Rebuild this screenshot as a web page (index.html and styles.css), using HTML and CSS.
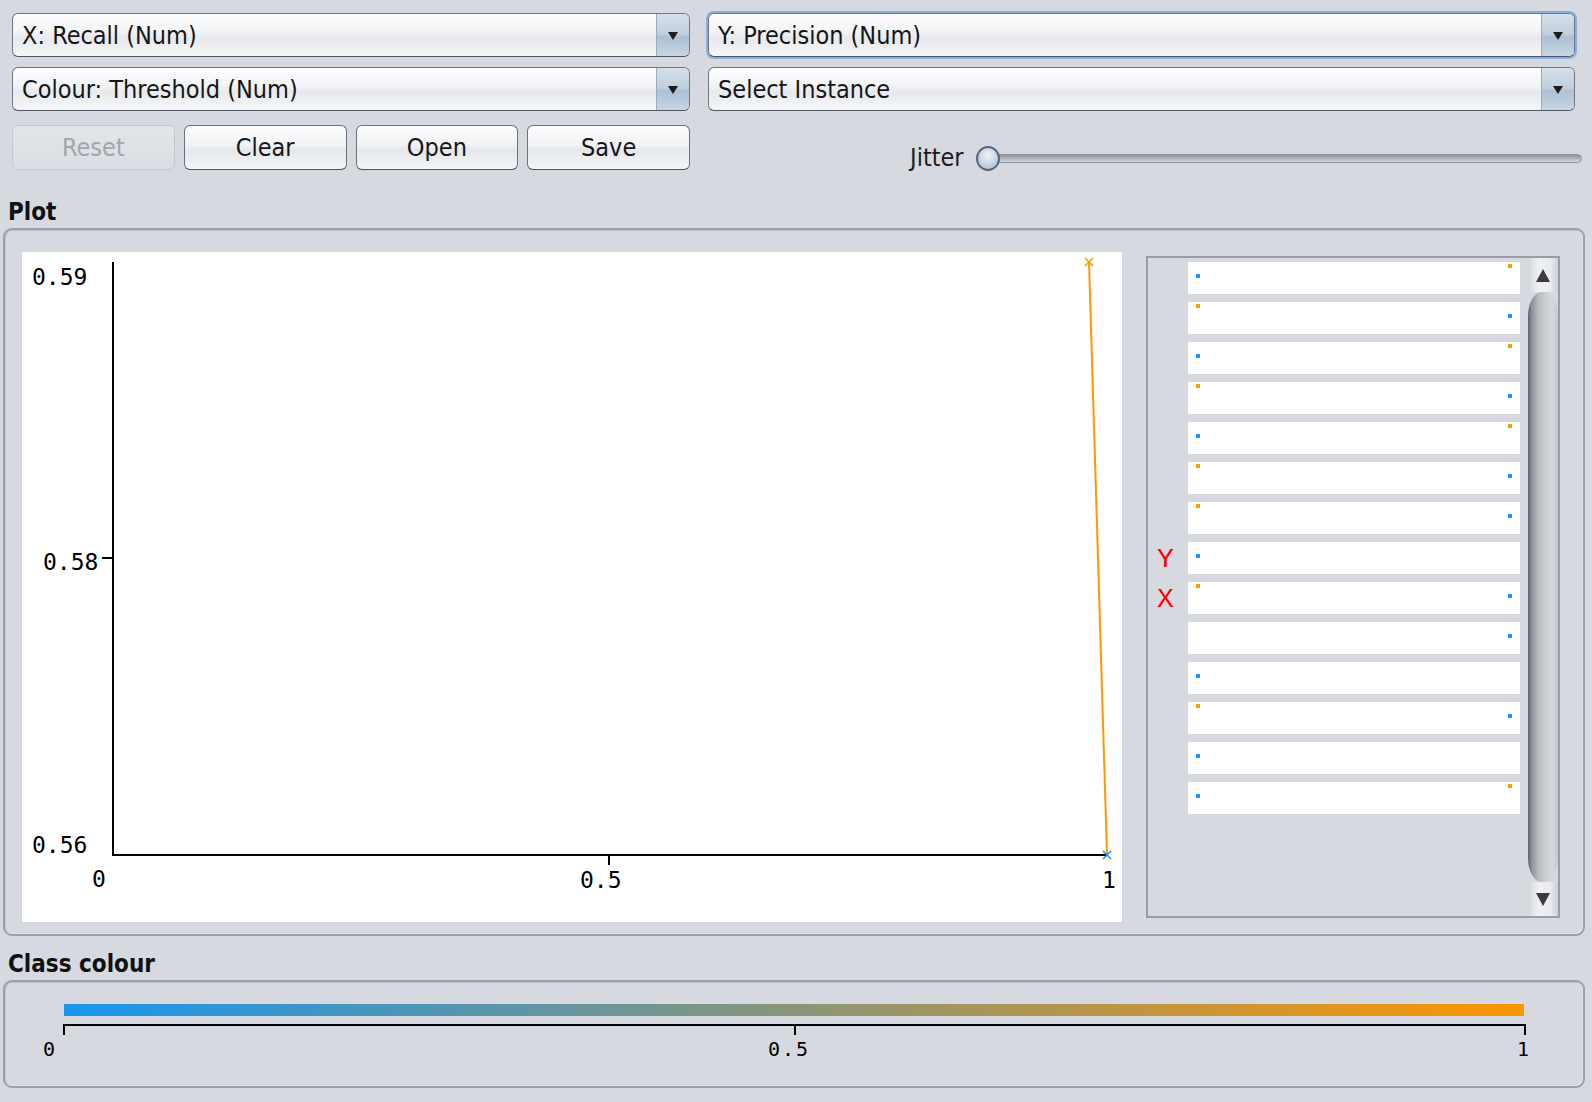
FILE: index.html
```html
<!DOCTYPE html>
<html>
<head>
<meta charset="utf-8">
<title>Plot</title>
<link rel="stylesheet" href="styles.css">
</head>
<body>
<div class="app">
  <div class="controls">
    <div class="combo"><span class="combo-text">X: Recall (Num)</span><span class="combo-arrow"><i class="tri-down"></i></span></div>
    <div class="combo focused"><span class="combo-text">Y: Precision (Num)</span><span class="combo-arrow"><i class="tri-down"></i></span></div>
    <div class="combo"><span class="combo-text">Colour: Threshold (Num)</span><span class="combo-arrow"><i class="tri-down"></i></span></div>
    <div class="combo"><span class="combo-text">Select Instance</span><span class="combo-arrow"><i class="tri-down"></i></span></div>
    <div class="buttons">
      <button class="btn" disabled>Reset</button>
      <button class="btn">Clear</button>
      <button class="btn">Open</button>
      <button class="btn">Save</button>
    </div>
    <div class="jitter">
      <span class="jitter-label">Jitter</span>
      <div class="slider"><div class="track"></div><div class="knob"></div></div>
    </div>
  </div>

  <div class="section-title">Plot</div>
  <div class="panel plot-panel">
    <div class="plot-area">
      <svg class="plot-svg" width="1100" height="670" viewBox="0 0 1100 670">
        <g stroke="#000" stroke-width="2" shape-rendering="crispEdges">
          <line x1="91" y1="10" x2="91" y2="604"/>
          <line x1="90" y1="603" x2="1086" y2="603"/>
          <line x1="80" y1="306" x2="91" y2="306"/>
          <line x1="587" y1="603" x2="587" y2="613"/>
        </g>
        <g class="axis-label">
          <text x="10" y="33">0.59</text>
          <text x="21" y="318">0.58</text>
          <text x="10" y="601">0.56</text>
          <text x="70" y="635">0</text>
          <text x="558" y="636">0.5</text>
          <text x="1080" y="636">1</text>
        </g>
        <line x1="1067" y1="10" x2="1085" y2="603" stroke="#ff9900" stroke-width="2"/>
        <g stroke="#ff9900" stroke-width="1.6">
          <line x1="1063" y1="6" x2="1071" y2="14"/>
          <line x1="1063" y1="14" x2="1071" y2="6"/>
        </g>
        <g stroke="#1a94f0" stroke-width="1.6">
          <line x1="1081" y1="599" x2="1089" y2="607"/>
          <line x1="1081" y1="607" x2="1089" y2="599"/>
        </g>
      </svg>
    </div>
    <div class="attr-panel">
      <div class="attr-list">
        <div class="attr-row"><span class="marker"></span><div class="bar"><i class="dot b l"></i><i class="dot o r"></i></div></div>
        <div class="attr-row"><span class="marker"></span><div class="bar"><i class="dot o l"></i><i class="dot b r"></i></div></div>
        <div class="attr-row"><span class="marker"></span><div class="bar"><i class="dot b l"></i><i class="dot o r"></i></div></div>
        <div class="attr-row"><span class="marker"></span><div class="bar"><i class="dot o l"></i><i class="dot b r"></i></div></div>
        <div class="attr-row"><span class="marker"></span><div class="bar"><i class="dot b l"></i><i class="dot o r"></i></div></div>
        <div class="attr-row"><span class="marker"></span><div class="bar"><i class="dot o l"></i><i class="dot b r"></i></div></div>
        <div class="attr-row"><span class="marker"></span><div class="bar"><i class="dot o l"></i><i class="dot b r"></i></div></div>
        <div class="attr-row"><span class="marker">Y</span><div class="bar"><i class="dot b l"></i></div></div>
        <div class="attr-row"><span class="marker">X</span><div class="bar"><i class="dot o l"></i><i class="dot b r"></i></div></div>
        <div class="attr-row"><span class="marker"></span><div class="bar"><i class="dot b r"></i></div></div>
        <div class="attr-row"><span class="marker"></span><div class="bar"><i class="dot b l"></i></div></div>
        <div class="attr-row"><span class="marker"></span><div class="bar"><i class="dot o l"></i><i class="dot b r"></i></div></div>
        <div class="attr-row"><span class="marker"></span><div class="bar"><i class="dot b l"></i></div></div>
        <div class="attr-row"><span class="marker"></span><div class="bar"><i class="dot b l"></i><i class="dot o r"></i></div></div>
      </div>
      <div class="scrollbar">
        <div class="sb-btn"><i class="tri-up"></i></div>
        <div class="sb-thumb"></div>
        <div class="sb-btn"><i class="tri-down-sb"></i></div>
      </div>
    </div>
  </div>

  <div class="section-title class-title">Class colour</div>
  <div class="panel class-panel">
    <div class="colour-bar"></div>
    <svg class="colour-axis" width="1578" height="50" viewBox="0 0 1578 50">
      <g stroke="#000" stroke-width="2" shape-rendering="crispEdges">
        <line x1="58" y1="9" x2="1521" y2="9"/>
        <line x1="59" y1="8" x2="59" y2="19"/>
        <line x1="790" y1="8" x2="790" y2="19"/>
        <line x1="1520" y1="8" x2="1520" y2="19"/>
      </g>
      <g class="scale-label">
        <text x="45" y="40" text-anchor="middle">0</text>
        <text x="763" y="40">0.5</text>
        <text x="1519" y="40" text-anchor="middle">1</text>
      </g>
    </svg>
  </div>
</div>
</body>
</html>
```

FILE: styles.css
```css
* { box-sizing: border-box; }
html, body { margin: 0; padding: 0; }
body {
  width: 1592px;
  height: 1102px;
  overflow: hidden;
  background: #d6d9df;
  font-family: "DejaVu Sans Condensed", "DejaVu Sans", sans-serif;
  font-stretch: condensed;
  color: #1c1c1c;
}

.controls {
  display: grid;
  grid-template-columns: 678px 867px;
  column-gap: 18px;
  row-gap: 10px;
  padding: 13px 0 0 12px;
}

.combo {
  height: 44px;
  display: flex;
  border: 1px solid #6f7681;
  border-bottom-color: #4f5661;
  border-radius: 6px;
  overflow: hidden;
  background: linear-gradient(to bottom, #fdfdfe 0%, #f3f4f6 40%, #e7e9ed 58%, #f5f6f8 100%);
}
.combo.focused { box-shadow: 0 0 0 2px #88ade0; }
.combo-text {
  flex: 1;
  display: flex;
  align-items: center;
  padding: 1px 0 0 9px;
  font-size: 25px;
  white-space: nowrap;
  color: #161616;
}
.combo-arrow {
  width: 33px;
  border-left: 1px solid #9aacc0;
  background: linear-gradient(to bottom, #d6e0eb 0%, #c0cedd 48%, #adc0d4 54%, #c8d5e3 100%);
  display: flex;
  align-items: center;
  justify-content: center;
}
.tri-down {
  width: 0; height: 0;
  border-left: 5px solid transparent;
  border-right: 5px solid transparent;
  border-top: 8px solid #1b1b1b;
  margin-top: 2px;
}

.buttons {
  display: grid;
  grid-template-columns: repeat(4, 1fr);
  column-gap: 9px;
  margin-top: 4px;
}
.btn {
  height: 45px;
  padding: 0;
  font-family: inherit;
  font-stretch: condensed;
  font-size: 25px;
  color: #161616;
  border: 1px solid #6a717c;
  border-bottom-color: #4c535e;
  border-radius: 6px;
  background: linear-gradient(to bottom, #fdfdfe 0%, #f1f2f5 45%, #e4e7eb 55%, #f4f5f7 100%);
}
.btn:disabled {
  color: #a3a6ab;
  border-color: #c5c8cd;
  background: linear-gradient(to bottom, #e3e5e9, #dadde2);
}

.jitter {
  display: flex;
  align-items: center;
  margin-top: 4px;
  margin-right: -7px;
  padding: 20px 0 0 202px;
}
.jitter-label { font-size: 25px; line-height: 24px; }
.slider {
  position: relative;
  flex: 1;
  height: 24px;
  margin-left: 10px;
}
.track {
  position: absolute;
  left: 12px; right: 0; top: 8px;
  height: 9px;
  border-radius: 5px;
  border: 1px solid #8d9198;
  background: linear-gradient(to bottom, #8f939a 0%, #b2b5bb 50%, #d3d6da 100%);
}
.knob {
  position: absolute;
  left: 2px; top: 0;
  width: 24px; height: 25px;
  border-radius: 50%;
  border: 2px solid #586679;
  background: radial-gradient(circle at 50% 35%, #eef3f8 0%, #c2d1e0 60%, #a2b6cb 100%);
}

.section-title {
  height: 28px;
  line-height: 28px;
  margin-top: 28px;
  padding-left: 8px;
  font-size: 24px;
  font-weight: bold;
  color: #111;
}
.class-title { margin-top: 14px; }

.panel {
  margin: 2px 7px 0 3px;
  border: 2px solid #9ca0a7;
  border-radius: 9px;
  box-shadow: inset 1px 1px 0 #c0c3c9, inset -1px -1px 0 #e2e4e8;
}
.plot-panel {
  height: 708px;
  display: flex;
  align-items: flex-start;
  gap: 24px;
  padding: 22px 23px 12px 17px;
}
.plot-area {
  width: 1100px;
  height: 670px;
  background: #fff;
  flex: none;
}
.plot-svg { display: block; }
.axis-label text {
  font-family: "DejaVu Sans Mono", monospace;
  font-size: 23px;
  fill: #000;
}

.attr-panel {
  width: 414px;
  height: 662px;
  margin-top: 4px;
  border: 2px solid #999da5;
  display: flex;
  flex: none;
}
.attr-list {
  flex: 1;
  display: flex;
  flex-direction: column;
  gap: 8px;
  padding-top: 4px;
}
.attr-row { display: flex; height: 32px; }
.marker {
  width: 40px;
  padding: 4px 0 0 9px;
  font-family: "Liberation Mono", "Courier New", monospace;
  font-stretch: normal;
  font-weight: normal;
  font-size: 28px;
  line-height: 28px;
  color: #ff0000;
}
.bar {
  position: relative;
  width: 332px;
  background: #fff;
}
.dot { position: absolute; width: 4px; height: 4px; }
.dot.b { background: #1a94f0; top: 12px; }
.dot.o { background: #ff9900; top: 2px; }
.dot.l { left: 8px; }
.dot.r { left: 320px; }

.scrollbar {
  width: 30px;
  display: flex;
  flex-direction: column;
}
.sb-btn {
  height: 34px;
  display: flex;
  align-items: center;
  justify-content: center;
  background: linear-gradient(to right, #d4d7db 0%, #eff0f2 35%, #e9ebee 75%, #cdd0d4 100%);
}
.tri-up {
  width: 0; height: 0;
  border-left: 7px solid transparent;
  border-right: 7px solid transparent;
  border-bottom: 13px solid #3a3c41;
}
.tri-down-sb {
  width: 0; height: 0;
  border-left: 7px solid transparent;
  border-right: 7px solid transparent;
  border-top: 13px solid #3a3c41;
}
.sb-thumb {
  flex: 1;
  border-radius: 14px / 24px;
  background: linear-gradient(to right, #5d6066 0%, #8c8f95 12%, #b8bbc0 35%, #ccced3 60%, #d5d8dc 80%, #c4c7cb 100%);
}

.class-panel {
  height: 108px;
  padding-top: 22px;
}
.colour-bar {
  margin-left: 59px;
  width: 1460px;
  height: 12px;
  background: linear-gradient(to right, #1796ef, #fd9502);
}
.colour-axis { display: block; }
.scale-label text {
  font-family: "DejaVu Sans Mono", monospace;
  font-size: 20px;
  letter-spacing: 2px;
  fill: #000;
}
```
